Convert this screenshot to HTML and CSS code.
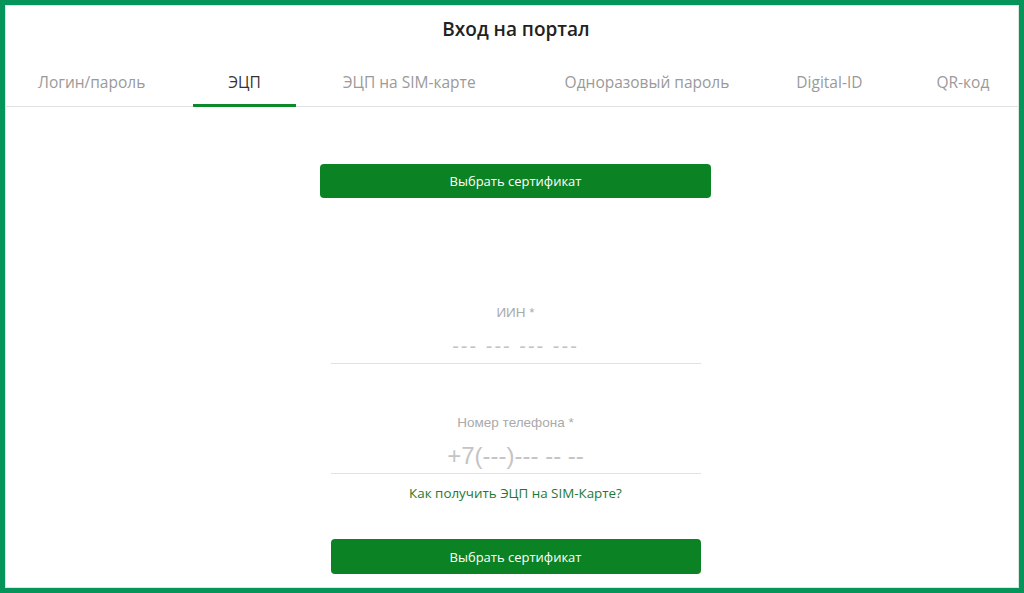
FILE: index.html
```html
<!DOCTYPE html>
<html lang="ru">
  <head>
    <meta charset="UTF-8" />
    <meta name="viewport" content="width=device-width, initial-scale=1.0" />
    <title>Вход на портал</title>
    <link rel="stylesheet" href="styles.css">
  </head>
  <body>
    <div class="frame">
      <h1 class="title">Вход на портал</h1>

      <div class="tabs">
        <div class="tab">Логин/пароль</div>
        <div class="tab active">ЭЦП</div>
        <div class="tab">ЭЦП на SIM-карте</div>
        <div class="tab">Одноразовый пароль</div>
        <div class="tab">Digital-ID</div>
        <div class="tab">QR-код</div>
      </div>

      <div class="content">
        <button class="btn wide">Выбрать сертификат</button>

        <div class="form">
          <div class="field iin">
            <label>ИИН *</label>
            <div class="input">--- --- --- ---</div>
          </div>

          <div class="field phone">
            <label>Номер телефона *</label>
            <div class="input big">+7(---)--- -- --</div>
          </div>

          <a class="help" href="#">Как получить ЭЦП на SIM-Карте?</a>

          <button class="btn">Выбрать сертификат</button>
        </div>
      </div>
    </div>
  </body>
</html>
```

FILE: styles.css
```css
* {
  box-sizing: border-box;
}
html,
body {
  margin: 0;
  height: 100%;
}
body {
  font-family: "Open Sans", "Noto Sans", sans-serif;
  background: #fff;
}

.frame {
  height: 593px;
  border: 5px solid #05955a;
  box-shadow: inset 1px 1px 0 #d9e8df, inset -1px -1px 0 #d9e8df;
  overflow: hidden;
}

.title {
  margin: 0;
  padding: 10px 0 0 8px;
  font-size: 19px;
  line-height: 28px;
  font-weight: 600;
  color: #222;
  text-align: center;
}

.tabs {
  display: flex;
  border-bottom: 1px solid #e2e2e2;
  padding-top: 27px;
  white-space: nowrap;
}

.tab {
  padding: 0 33px 10px 33px;
  margin-right: 15px;
  margin-bottom: -1px;
  font-size: 15.5px;
  line-height: 24px;
  color: #9a9a9a;
  border-bottom: 3px solid transparent;
}

/* spacing tuned per tab */
.tab:nth-child(2) {
  margin-right: 14px;
  padding: 0 35px 10px 35px;
}
.tab:nth-child(3) {
  margin-right: 23px;
}
.tab:nth-child(4) {
  margin-right: 1px;
}
.tab:nth-child(5) {
  margin-right: 8px;
}

.tab.active {
  color: #333;
  border-bottom-color: #0b8a2a;
}

.content {
  display: flex;
  flex-direction: column;
  align-items: center;
  padding: 57px 0 0 7px;
}

.btn {
  display: block;
  width: 370px;
  height: 35px;
  border: 0;
  border-radius: 4px;
  background-color: #0b8224;
  color: #fff;
  font-family: "Open Sans", "Noto Sans", sans-serif;
  font-size: 13px;
  cursor: pointer;
}

.btn.wide {
  width: 391px;
  height: 34px;
}

.form {
  width: 370px;
  display: flex;
  flex-direction: column;
  align-items: center;
  margin-top: 107px;
}

.field {
  width: 100%;
  text-align: center;
}

.field label {
  display: block;
  font-family: "Liberation Sans", Arial, sans-serif;
  font-size: 13.5px;
  line-height: 16px;
  color: #aaa;
  margin-bottom: 8px;
}

.input {
  height: 35px;
  line-height: 34px;
  border-bottom: 1px solid #dfe2e8;
  font-family: "Liberation Sans", Arial, sans-serif;
  font-size: 20px;
  color: #c4c4c4;
  letter-spacing: 2px;
}

.input.big {
  font-size: 24px;
  letter-spacing: 0;
}

.phone {
  margin-top: 51px;
}

.help {
  margin-top: 10px;
  font-size: 13.4px;
  line-height: 18px;
  color: #1d7a34;
  text-decoration: none;
}

.form .btn {
  margin-top: 37px;
}
```
